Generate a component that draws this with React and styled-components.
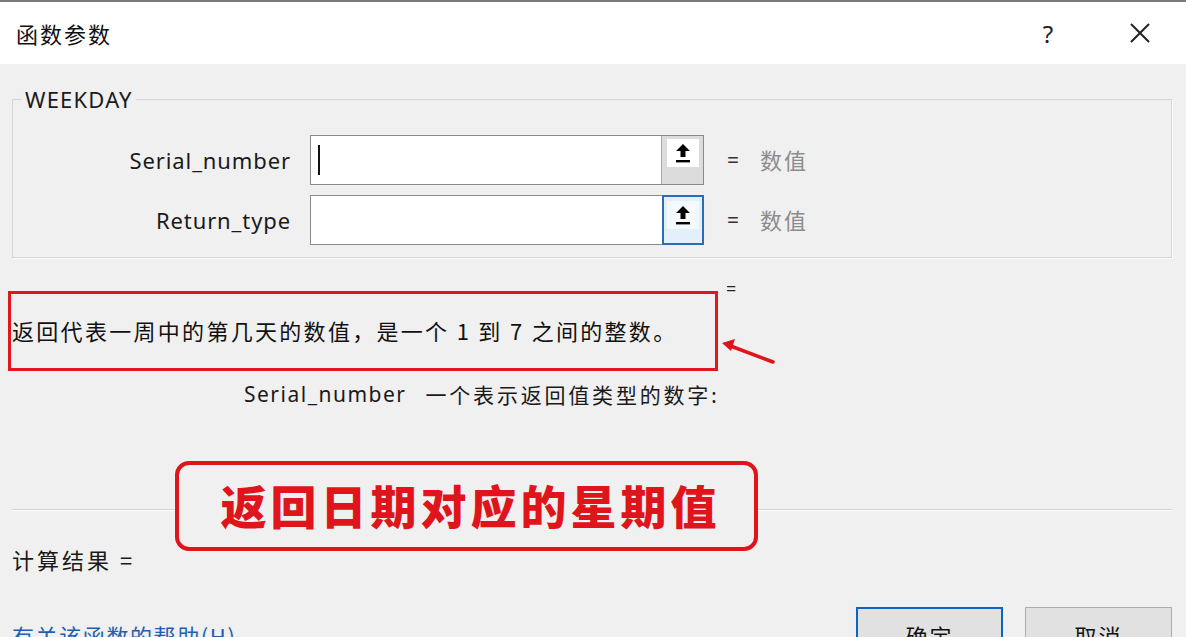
import React from "react";
import styled, { createGlobalStyle } from "styled-components";

const GlobalStyle = createGlobalStyle`
  html, body { margin: 0; padding: 0; background: #f0f0f0; }
  body { font-family: "Noto Sans", "Noto Sans CJK SC", sans-serif; color: #1a1a1a; }
  * { box-sizing: border-box; }
`;

const Window = styled.div`
  width: 1186px;
  height: 637px;
  overflow: hidden;
  border-top: 2px solid #7a7a7a;
  display: flex;
  flex-direction: column;
  background: #f0f0f0;
`;

const TitleBar = styled.div`
  height: 62px;
  flex: none;
  background: #ffffff;
  display: flex;
  align-items: center;
  padding: 0 0 0 16px;
`;

const Title = styled.div`
  flex: 1;
  font-family: "Noto Sans CJK SC", sans-serif;
  font-size: 22px;
  letter-spacing: 2px;
  color: #111;
`;

const TitleButton = styled.div`
  width: 92px;
  height: 62px;
  display: flex;
  align-items: center;
  justify-content: center;
  font-size: 24px;
  color: #222;
`;

const Body = styled.div`
  position: relative;
  flex: 1;
  display: flex;
  flex-direction: column;
  padding: 23px 14px 0 12px;
`;

const Group = styled.fieldset`
  margin: 0;
  width: 1160px;
  padding: 24px 0 12px 0;
  border: 1px solid #d6d6d6;
  box-shadow: 1px 1px 0 #fbfbfb;
  display: flex;
  flex-direction: column;
  gap: 10px;
`;

const Legend = styled.legend`
  margin-left: 9px;
  padding: 0 3px;
  font-size: 22px;
  line-height: 24px;
  letter-spacing: 1.2px;
  color: #1a1a1a;
`;

const ArgRow = styled.div`
  display: flex;
  align-items: center;
  height: 50px;
`;

const ArgLabel = styled.div`
  width: 278px;
  text-align: right;
  font-size: 22px;
  letter-spacing: 0.9px;
  color: #1a1a1a;
  margin-right: 19px;
`;

const InputBox = styled.div`
  width: 394px;
  height: 50px;
  border: 1px solid #8a8a8a;
  background: #fff;
  display: flex;
`;

const InputField = styled.div`
  flex: 1;
  display: flex;
  align-items: center;
  padding-left: 7px;
`;

const Caret = styled.div`
  width: 2px;
  height: 30px;
  background: #111;
`;

const PickButton = styled.div`
  width: 42px;
  height: 100%;
  flex: none;
  display: flex;
  justify-content: center;
  ${(p) =>
    p.$focused
      ? `border: 2px solid #2b6cb5; background: #e3f0fb; margin: -1px -1px -1px 0; height: 50px; width: 42px; padding-top: 4px;`
      : `border-left: 1px solid #a9a9a9; background: #dcdcdc; padding-top: 3px;`}
`;

const PickInner = styled.div`
  width: 32px;
  height: 28px;
  background: ${(p) => (p.$focused ? "#f4f9fe" : "#fff")};
  display: flex;
  align-items: center;
  justify-content: center;
`;

const Equals = styled.div`
  margin-left: 23px;
  font-size: 21px;
  color: #333;
  width: 33px;
`;

const ValueHint = styled.div`
  font-family: "Noto Sans CJK SC", sans-serif;
  font-size: 22px;
  letter-spacing: 2px;
  color: #8c8c8c;
  margin-top: -3px;
`;

const DescRow = styled.div`
  display: flex;
  margin-top: 20px;
`;

const RedBox = styled.div`
  margin-left: -4px;
  margin-top: 13px;
  width: 710px;
  height: 80px;
  border: 3px solid #e3151d;
  display: flex;
  align-items: center;
  padding-left: 1px;
  padding-bottom: 2px;
  font-family: "Noto Sans CJK SC", sans-serif;
  font-size: 22px;
  letter-spacing: 2.3px;
  color: #111;
`;

const SideCol = styled.div`
  display: flex;
  flex-direction: column;
`;

const SmallEq = styled.div`
  margin-left: 8px;
  font-size: 18px;
  line-height: 20px;
  color: #222;
`;

const ArgDesc = styled.div`
  margin-top: 10px;
  padding-left: 232px;
  font-size: 21px;
  line-height: 26px;
  color: #1a1a1a;
  display: flex;
  gap: 19px;
`;

const ArgDescName = styled.span`
  letter-spacing: 1.5px;
`;

const ArgDescCn = styled.span`
  font-family: "Noto Sans CJK SC", sans-serif;
  letter-spacing: 2.8px;
`;

const Separator = styled.div`
  margin-top: 102px;
  width: 1160px;
  border-top: 1px solid #d4d4d4;
  border-bottom: 1px solid #fdfdfd;
`;

const ResultLine = styled.div`
  margin-top: 34px;
  font-family: "Noto Sans CJK SC", sans-serif;
  font-size: 22px;
  line-height: 28px;
  letter-spacing: 3px;
  color: #1a1a1a;
`;

const Footer = styled.div`
  margin-top: 34px;
  display: flex;
  align-items: flex-start;
  gap: 22px;
`;

const HelpLink = styled.a`
  flex: 1;
  padding-top: 12px;
  font-family: "Noto Sans CJK SC", sans-serif;
  font-size: 22px;
  letter-spacing: 1.6px;
  color: #1f5fb0;
  text-decoration: underline;
`;

const DialogButton = styled.div`
  width: 147px;
  height: 46px;
  flex: none;
  background: #e1e1e1;
  border: ${(p) => (p.$primary ? "2px solid #0a64c8" : "1px solid #adadad")};
  display: flex;
  align-items: center;
  justify-content: center;
  padding-top: 10px;
  font-family: "Noto Sans CJK SC", sans-serif;
  font-size: 22px;
  letter-spacing: 2px;
  color: #111;
`;

const Callout = styled.div`
  position: absolute;
  left: 175px;
  top: 397px;
  width: 583px;
  height: 90px;
  border: 4px solid #e0141b;
  border-radius: 14px;
  background: #f0f0f0;
  display: flex;
  align-items: center;
  justify-content: center;
  padding-bottom: 4px;
  padding-left: 8px;
  font-family: "Noto Sans CJK SC", sans-serif;
  font-weight: 900;
  font-size: 46px;
  letter-spacing: 4px;
  color: #e0141b;
`;

const UploadIcon = () => (
  <svg width="18" height="22" viewBox="0 0 18 22">
    <path d="M9 2 L16 9 L11.5 9 L11.5 15 L6.5 15 L6.5 9 L2 9 Z" fill="#000" />
    <rect x="2" y="18" width="14" height="2.4" fill="#000" />
  </svg>
);

const CloseIcon = () => (
  <svg width="22" height="22" viewBox="0 0 22 22">
    <path d="M2 2 L20 20 M20 2 L2 20" stroke="#222" strokeWidth="2" />
  </svg>
);

const RedArrow = () => (
  <svg width="60" height="34" viewBox="0 0 60 34" style={{ marginTop: 36 }}>
    <path d="M55 28 L10 11" stroke="#e0141b" strokeWidth="3.5" strokeLinecap="round" />
    <path d="M4 9 L17 5 L13 17 Z" fill="#e0141b" />
  </svg>
);

const args = [
  { name: "Serial_number", caret: true },
  { name: "Return_type", focused: true },
];

export default function App() {
  return (
    <>
      <GlobalStyle />
      <Window>
        <TitleBar>
          <Title>函数参数</Title>
          <TitleButton>?</TitleButton>
          <TitleButton>
            <CloseIcon />
          </TitleButton>
        </TitleBar>
        <Body>
          <Group>
            <Legend>WEEKDAY</Legend>
            {args.map((a) => (
              <ArgRow key={a.name}>
                <ArgLabel>{a.name}</ArgLabel>
                <InputBox>
                  <InputField>{a.caret && <Caret />}</InputField>
                  <PickButton $focused={a.focused}>
                    <PickInner $focused={a.focused}>
                      <UploadIcon />
                    </PickInner>
                  </PickButton>
                </InputBox>
                <Equals>=</Equals>
                <ValueHint>数值</ValueHint>
              </ArgRow>
            ))}
          </Group>
          <DescRow>
            <RedBox>返回代表一周中的第几天的数值，是一个 1 到 7 之间的整数。</RedBox>
            <SideCol>
              <SmallEq>=</SmallEq>
              <RedArrow />
            </SideCol>
          </DescRow>
          <ArgDesc>
            <ArgDescName>Serial_number</ArgDescName>
            <ArgDescCn>一个表示返回值类型的数字:</ArgDescCn>
          </ArgDesc>
          <Separator />
          <ResultLine>计算结果 =</ResultLine>
          <Footer>
            <HelpLink>有关该函数的帮助(H)</HelpLink>
            <DialogButton $primary>确定</DialogButton>
            <DialogButton>取消</DialogButton>
          </Footer>
          <Callout>返回日期对应的星期值</Callout>
        </Body>
      </Window>
    </>
  );
}
